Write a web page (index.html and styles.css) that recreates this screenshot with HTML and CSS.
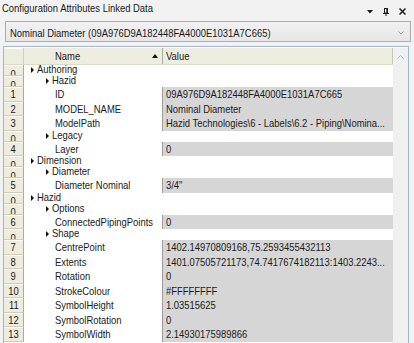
FILE: index.html
```html
<!DOCTYPE html>
<html lang="en">
<head>
  <meta charset="UTF-8">
  <meta name="viewport" content="width=device-width, initial-scale=1.0">
  <title>Configuration Attributes Linked Data</title>
  <link rel="stylesheet" href="styles.css">
</head>
<body>

  <!-- Panel title with dock buttons -->
  <div class="titlebar">
    <span class="title"><span class="t">Configuration Attributes Linked Data</span></span>
    <span class="tools">
      <svg width="6" height="7" viewBox="0 0 6 7"><polygon points="0,2 6,2 3,5.5" fill="#1e1e1e"/></svg>
      <svg width="6" height="8" viewBox="0 0 6 8"><rect x="1.5" y="0.5" width="3" height="4.5" fill="none" stroke="#1e1e1e"/><line x1="3.8" y1="0.5" x2="3.8" y2="5" stroke="#1e1e1e"/><line x1="0" y1="5.5" x2="6" y2="5.5" stroke="#1e1e1e"/><line x1="3" y1="5.5" x2="3" y2="8" stroke="#1e1e1e"/></svg>
      <svg width="7" height="7" viewBox="0 0 7 7"><path d="M0.5 0.5 L6.5 6.5 M6.5 0.5 L0.5 6.5" stroke="#1e1e1e" stroke-width="1.5"/></svg>
    </span>
  </div>

  <!-- Selected object -->
  <div class="combo">
    <span class="combo-text"><span class="t">Nominal Diameter (09A976D9A182448FA4000E1031A7C665)</span></span>
    <svg width="6" height="4" viewBox="0 0 6 4"><polyline points="0.5,0.5 3,3 5.5,0.5" fill="none" stroke="#9a9a9a"/></svg>
  </div>

  <!-- Attribute tree grid -->
  <div class="grid">
    <div class="gridbody">
      <div class="row head">
        <div class="rh"></div>
        <div class="hname"><span class="t">Name</span><i class="sort"></i></div>
        <div class="hvalue"><span class="t">Value</span></div>
      </div>

      <div class="row group"><div class="rh"><span class="t">0</span></div><div class="name l1"><i class="arrow"></i><span class="t">Authoring</span></div><div class="value"></div></div>
      <div class="row group"><div class="rh"><span class="t">0</span></div><div class="name l2"><i class="arrow"></i><span class="t">Hazid</span></div><div class="value"></div></div>
      <div class="row"><div class="rh"><span class="t">1</span></div><div class="name"><span class="t">ID</span></div><div class="value"><span class="t">09A976D9A182448FA4000E1031A7C665</span></div></div>
      <div class="row"><div class="rh"><span class="t">2</span></div><div class="name"><span class="t">MODEL_NAME</span></div><div class="value"><span class="t">Nominal Diameter</span></div></div>
      <div class="row"><div class="rh"><span class="t">3</span></div><div class="name"><span class="t">ModelPath</span></div><div class="value"><span class="t">Hazid Technologies\6 - Labels\6.2 - Piping\Nomina...</span></div></div>
      <div class="row group"><div class="rh"><span class="t">0</span></div><div class="name l2"><i class="arrow"></i><span class="t">Legacy</span></div><div class="value"></div></div>
      <div class="row"><div class="rh"><span class="t">4</span></div><div class="name"><span class="t">Layer</span></div><div class="value"><span class="t">0</span></div></div>
      <div class="row group"><div class="rh"><span class="t">0</span></div><div class="name l1"><i class="arrow"></i><span class="t">Dimension</span></div><div class="value"></div></div>
      <div class="row group"><div class="rh"><span class="t">0</span></div><div class="name l2"><i class="arrow"></i><span class="t">Diameter</span></div><div class="value"></div></div>
      <div class="row"><div class="rh"><span class="t">5</span></div><div class="name"><span class="t">Diameter Nominal</span></div><div class="value"><span class="t">3/4"</span></div></div>
      <div class="row group"><div class="rh"><span class="t">0</span></div><div class="name l1"><i class="arrow"></i><span class="t">Hazid</span></div><div class="value"></div></div>
      <div class="row group"><div class="rh"><span class="t">0</span></div><div class="name l2"><i class="arrow"></i><span class="t">Options</span></div><div class="value"></div></div>
      <div class="row"><div class="rh"><span class="t">6</span></div><div class="name"><span class="t">ConnectedPipingPoints</span></div><div class="value"><span class="t">0</span></div></div>
      <div class="row group"><div class="rh"><span class="t">0</span></div><div class="name l2"><i class="arrow"></i><span class="t">Shape</span></div><div class="value"></div></div>
      <div class="row"><div class="rh"><span class="t">7</span></div><div class="name"><span class="t">CentrePoint</span></div><div class="value"><span class="t">1402.14970809168,75.2593455432113</span></div></div>
      <div class="row"><div class="rh"><span class="t">8</span></div><div class="name"><span class="t">Extents</span></div><div class="value"><span class="t">1401.07505721173,74.7417674182113:1403.2243...</span></div></div>
      <div class="row"><div class="rh"><span class="t">9</span></div><div class="name"><span class="t">Rotation</span></div><div class="value"><span class="t">0</span></div></div>
      <div class="row"><div class="rh"><span class="t">10</span></div><div class="name"><span class="t">StrokeColour</span></div><div class="value"><span class="t">#FFFFFFFF</span></div></div>
      <div class="row"><div class="rh"><span class="t">11</span></div><div class="name"><span class="t">SymbolHeight</span></div><div class="value"><span class="t">1.03515625</span></div></div>
      <div class="row"><div class="rh"><span class="t">12</span></div><div class="name"><span class="t">SymbolRotation</span></div><div class="value"><span class="t">0</span></div></div>
      <div class="row"><div class="rh"><span class="t">13</span></div><div class="name"><span class="t">SymbolWidth</span></div><div class="value"><span class="t">2.14930175989866</span></div></div>
    </div>
    <div class="scrollbar">
      <svg width="7" height="4" viewBox="0 0 7 4"><polyline points="0.5,3.5 3.5,0.5 6.5,3.5" fill="none" stroke="#b4b4b4"/></svg>
    </div>
  </div>

</body>
</html>
```

FILE: styles.css
```css
* {
  box-sizing: border-box;
}
body {
  margin: 0;
  height: 343px;
  overflow: hidden;
  background-color: #f2f2f2;
  font-family: "Liberation Sans", Arial, sans-serif;
  font-size: 11.5px;
  color: #1a1a1a;
}

/* the UI font is narrower than Arial, squeeze the text to match */
.t {
  display: inline-block;
  transform: scaleX(0.82);
  transform-origin: 0 0;
}

/* title bar */
.titlebar {
  display: flex;
  height: 19px;
  padding: 0 8px 0 2px;
}
.title {
  flex: 1;
  line-height: 17px;
  white-space: nowrap;
}
.tools {
  display: flex;
  align-items: center;
  gap: 10px;
  padding-top: 6px;
  height: 17px;
}

/* combo box */
.combo {
  display: flex;
  align-items: center;
  height: 21px;
  margin: 2px 3px 0 5px;
  padding: 2px 6px 0 4px;
  border: 1px solid #acacac;
  background: linear-gradient(#f1f1f1, #e6e6e6);
}
.combo-text {
  flex: 1;
  white-space: nowrap;
}

/* grid */
.grid {
  display: flex;
  height: 310px;
  margin: 4px 5px 0 3px;
  padding-top: 1px;
  border: 1px solid #9fb6d3;
  background-color: #fff;
}
.gridbody {
  flex: 1;
  display: flex;
  flex-direction: column;
}
.scrollbar {
  width: 15px;
  background-color: #f0f0f0;
  display: flex;
  justify-content: center;
  padding-top: 7px;
}

.row {
  display: grid;
  grid-template-columns: 20px 138px 1fr;
  height: 14.5px;
  line-height: 14.5px;
  white-space: nowrap;
}
.row.group {
  height: 11px;
  line-height: 9px;
}
.row.head {
  height: 17px;
  line-height: 16px;
  background-color: #edecde;
  border-bottom: 1px solid #dcdbc9;
}

.rh {
  background-color: #edecde;
  border-right: 1px solid #a9a9a9;
  border-bottom: 1px solid #cfcdb9;
  box-shadow: inset 0 1px #fbfbf6;
  text-align: center;
  overflow: hidden;
}
.rh .t {
  transform-origin: 50% 0;
}
.row.group .rh {
  line-height: 14.5px;
  padding-top: 1.5px;
}
.row.head .rh {
  border-bottom: none;
  border-right-color: #d2d0bc;
}

.name {
  padding-left: 31px;
  overflow: hidden;
}
.row.group .name {
  overflow: visible;
}
.name.l1 {
  padding-left: 7px;
}
.name.l2 {
  padding-left: 22px;
}
.arrow {
  display: inline-block;
  width: 0;
  height: 0;
  margin-right: 3px;
  vertical-align: 0;
  border-left: 3px solid #111;
  border-top: 3px solid transparent;
  border-bottom: 3px solid transparent;
}

.value {
  padding-left: 3px;
  overflow: hidden;
  background-color: #d6d6d6;
  border-left: 1px solid #9d9d9d;
}
.row.group .value {
  background-color: transparent;
  border-left: none;
}

.hname {
  display: flex;
  align-items: center;
  padding-left: 31px;
  padding-right: 4px;
}
.sort {
  margin-left: auto;
  width: 0;
  height: 0;
  border-left: 3px solid transparent;
  border-right: 3px solid transparent;
  border-bottom: 4px solid #111;
}
.hvalue {
  padding-left: 3px;
  border-left: 1px solid #a9a9a9;
  border-right: 1px solid #c9c8b6;
}
```
